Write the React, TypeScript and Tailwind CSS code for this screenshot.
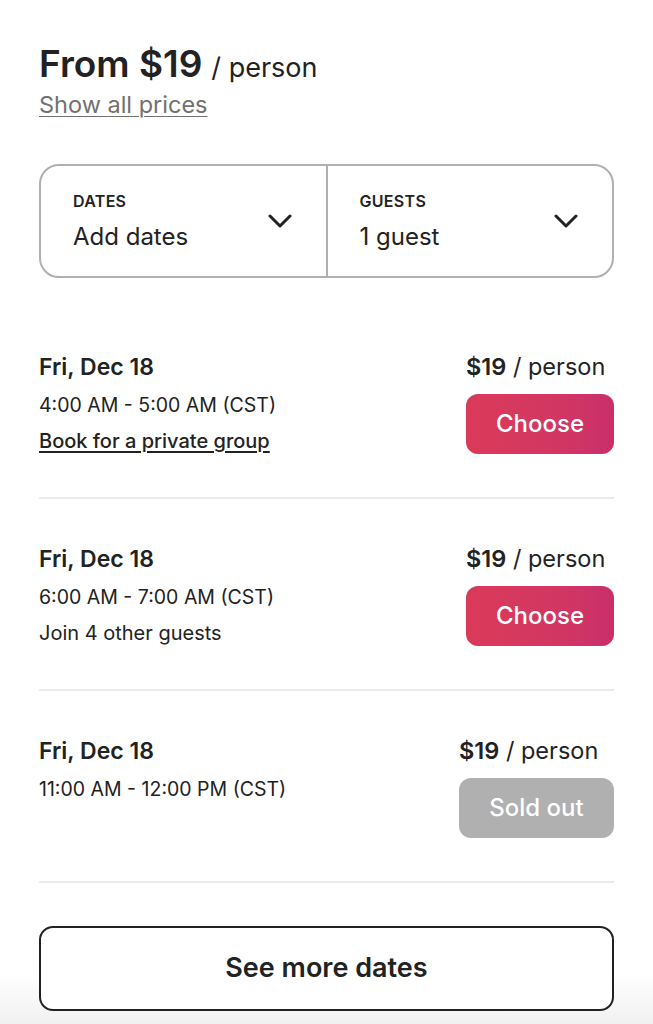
import React from "react";

const slots = [
  { date: "Fri, Dec 18", time: "4:00 AM - 5:00 AM (CST)", note: "Book for a private group", link: true, soldOut: false },
  { date: "Fri, Dec 18", time: "6:00 AM - 7:00 AM (CST)", note: "Join 4 other guests", link: false, soldOut: false },
  { date: "Fri, Dec 18", time: "11:00 AM - 12:00 PM (CST)", note: "", link: false, soldOut: true },
];

function Chevron() {
  return (
    <svg width="24" height="16" viewBox="0 0 24 16" fill="none">
      <polyline points="2,3 12,13 22,3" stroke="#222" strokeWidth="3" strokeLinecap="round" strokeLinejoin="round" />
    </svg>
  );
}

export default function App() {
  return (
    <div
      className="min-h-[1024px] w-full bg-[linear-gradient(to_bottom,#ffffff_0%,#ffffff_95%,#f1f1f1_100%)] text-[#222222] px-[39px] pt-[38px]"
      style={{ fontFamily: "Inter, 'Noto Sans', sans-serif" }}
    >
      {/* Header */}
      <div className="flex items-baseline gap-[9px]">
        <span className="text-[37px] font-semibold leading-[52px]">From $19</span>
        <span className="text-[27px] leading-[52px]">/ person</span>
      </div>
      <a className="block text-[23.5px] leading-[28px] text-[#717171] underline underline-offset-[3px] decoration-1 w-fit -mt-[3px]">
        Show all prices
      </a>

      {/* Selector */}
      <div className="mt-[45px] flex h-[114px] rounded-[20px] border-2 border-[#b0b0b0] overflow-hidden">
        <div className="flex-1 flex items-center justify-between pl-[32px] pr-[34px] border-r-2 border-[#b0b0b0]">
          <div className="flex flex-col">
            <span className="text-[16px] font-semibold leading-[20px] tracking-[0.3px]">DATES</span>
            <span className="text-[24px] leading-[30px] mt-[11px]">Add dates</span>
          </div>
          <Chevron />
        </div>
        <div className="flex-1 flex items-center justify-between pl-[32px] pr-[34px]">
          <div className="flex flex-col">
            <span className="text-[16px] font-semibold leading-[20px] tracking-[0.3px]">GUESTS</span>
            <span className="text-[24px] leading-[30px] mt-[11px]">1 guest</span>
          </div>
          <Chevron />
        </div>
      </div>

      {/* Slots */}
      <div className="mt-[29px]">
        {slots.map((s, i) => (
          <div key={i} className="flex justify-between pt-[46px] pb-[43px] border-b-2 border-[#ebebeb]">
            <div className="flex flex-col">
              <span className="text-[23px] font-semibold leading-[28px]">{s.date}</span>
              <span className="text-[19.5px] leading-[24px] mt-[12px]">{s.time}</span>
              {s.note && (
                <span
                  className={
                    s.link
                      ? "text-[20px] leading-[24px] mt-[12px] font-medium underline underline-offset-[3px]"
                      : "text-[20px] leading-[24px] mt-[12px]"
                  }
                >
                  {s.note}
                </span>
              )}
            </div>
            <div className="flex flex-col items-start">
              <span className="text-[23.5px] leading-[28px]">
                <span className="font-semibold">$19</span> / person
              </span>
              {s.soldOut ? (
                <button className="mt-[13px] h-[60px] w-[155px] rounded-[12px] bg-[#b0b0b0] text-white text-[24px] font-medium">
                  Sold out
                </button>
              ) : (
                <button className="mt-[13px] h-[60px] w-[148px] rounded-[12px] bg-[linear-gradient(to_right,#db3a59,#d03664_70%,#c82f6a)] text-white text-[24px] font-medium">
                  Choose
                </button>
              )}
            </div>
          </div>
        ))}
      </div>

      {/* See more */}
      <button className="mt-[43px] w-full h-[85px] rounded-[14px] border-2 border-[#222222] text-[27px] font-semibold bg-white">
        See more dates
      </button>
    </div>
  );
}
